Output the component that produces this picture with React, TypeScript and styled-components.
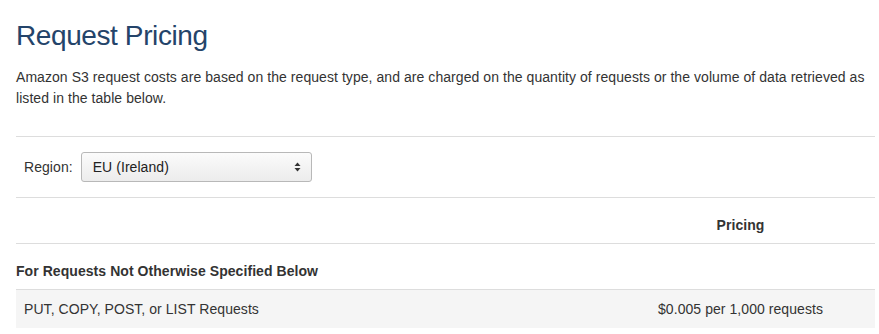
import React from "react";
import styled, { createGlobalStyle } from "styled-components";

const Global = createGlobalStyle`
  html, body { margin: 0; padding: 0; background: #fff; }
  body {
    font-family: "Helvetica Neue", Helvetica, "Liberation Sans", Arial, sans-serif;
    color: #333;
    font-size: 14px;
    letter-spacing: 0.06px;
  }
`;

const Page = styled.div`
  width: 859px;
  padding: 18px 4px 0 16px;
`;

const Title = styled.h2`
  margin: 0;
  font-size: 28px;
  line-height: 33px;
  font-weight: 400;
  color: #24446a;
  letter-spacing: -0.4px;
  padding-top: 1px;
  margin-bottom: -1px;
`;

const Intro = styled.p`
  margin: 16px 0 0;
  font-size: 14px;
  line-height: 21px;
  color: #333;
`;

const RegionBar = styled.div`
  margin-top: 27px;
  border-top: 1px solid #ddd;
  border-bottom: 1px solid #ddd;
  display: flex;
  align-items: center;
  gap: 8px;
  padding: 15px 8px 15px;
`;

const Label = styled.span`
  font-size: 14px;
  color: #333;
`;

const Select = styled.div`
  box-sizing: border-box;
  width: 231px;
  height: 30px;
  border: 1px solid #b8b8b8;
  border-radius: 3px;
  background: linear-gradient(#fbfbfb, #ececec);
  display: flex;
  align-items: center;
  justify-content: space-between;
  padding: 0 10px 0 11px;
  font-size: 14px;
  color: #222;
`;

const Arrows = styled.svg`
  width: 7px;
  height: 10px;
`;

const Table = styled.div`
  display: grid;
  grid-template-columns: 1fr 269px;
`;

const Row = styled.div<{ $shaded?: boolean; $head?: boolean }>`
  display: contents;
  & > div {
    border-bottom: 1px solid ${(p) => (p.$shaded ? "transparent" : "#ddd")};
    background: ${(p) => (p.$shaded ? "#f5f5f5" : "transparent")};
    font-weight: ${(p) => (p.$head ? 700 : 400)};
    line-height: 20px;
    padding: ${(p) => (p.$shaded ? "9px 8px 8px" : "17px 0 8px")};
  }
`;

const Cell = styled.div<{ $center?: boolean; $span?: boolean }>`
  text-align: ${(p) => (p.$center ? "center" : "left")};
  ${(p) => (p.$span ? "grid-column: 1 / span 2;" : "")}
`;

export default function App() {
  return (
    <>
      <Global />
      <Page>
        <Title>Request Pricing</Title>
        <Intro>
          Amazon S3 request costs are based on the request type, and are charged on the quantity of
          requests or the volume of data retrieved as listed in the table below.
        </Intro>
        <RegionBar>
          <Label>Region:</Label>
          <Select>
            <span>EU (Ireland)</span>
            <Arrows viewBox="0 0 7 10">
              <path d="M3.5 0.5 L6.5 4 L0.5 4 Z" fill="#333" />
              <path d="M3.5 9.5 L6.5 6 L0.5 6 Z" fill="#333" />
            </Arrows>
          </Select>
        </RegionBar>
        <Table>
          <Row $head>
            <Cell />
            <Cell $center>Pricing</Cell>
          </Row>
          <Row $head>
            <Cell $span>For Requests Not Otherwise Specified Below</Cell>
          </Row>
          <Row $shaded>
            <Cell>PUT, COPY, POST, or LIST Requests</Cell>
            <Cell $center>$0.005 per 1,000 requests</Cell>
          </Row>
        </Table>
      </Page>
    </>
  );
}
